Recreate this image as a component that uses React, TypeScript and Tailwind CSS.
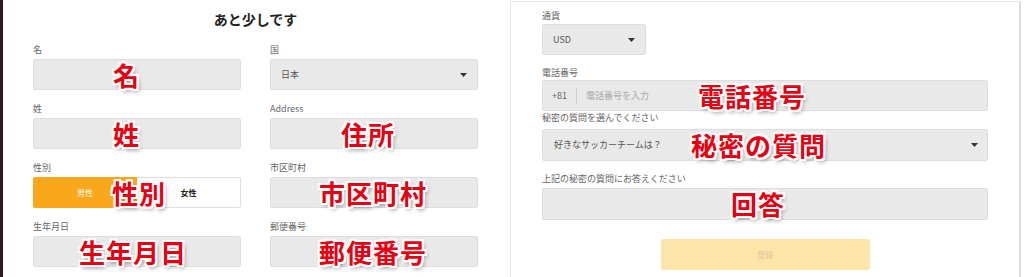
import React from "react";

const font = "font-['Noto_Sans_CJK_JP','Noto_Sans',sans-serif]";

function Annot({ text, className }: { text: string; className: string }) {
  return (
    <span
      className={`absolute top-1/2 -translate-y-1/2 text-[26px] leading-none font-bold text-[#e60012] whitespace-nowrap tracking-[1px] [text-shadow:-2px_-2px_0_#fff,2px_-2px_0_#fff,-2px_2px_0_#fff,2px_2px_0_#fff,0_-2px_0_#fff,0_2px_0_#fff,-2px_0_0_#fff,2px_0_0_#fff,2px_3px_4px_rgba(0,0,0,0.45)] ${className}`}
    >
      {text}
    </span>
  );
}

function Caret() {
  return (
    <svg width="7" height="4" viewBox="0 0 7 4" className="shrink-0">
      <path d="M0 0h7L3.5 4z" fill="#333" />
    </svg>
  );
}

function Field({
  label,
  annot,
  annotPos,
  children,
}: {
  label: string;
  annot?: string;
  annotPos?: string;
  children?: React.ReactNode;
}) {
  return (
    <div>
      <div className="h-[14px] text-[9px] leading-[14px] text-[#666]">{label}</div>
      <div className="relative mt-[2px] h-[31px] rounded-[2px] border border-[#dedede] bg-[#e9e9e9] flex items-center px-[10px] text-[9px] text-[#555]">
        {children}
        {annot && <Annot text={annot} className={annotPos ?? ""} />}
      </div>
    </div>
  );
}

export default function App() {
  return (
    <div className={`w-[1024px] h-[277px] bg-white flex overflow-hidden ${font}`}>
      {/* left screenshot */}
      <div className="w-[3px] h-full bg-[#2b1c1c]" />
      <div className="w-[507px] h-full pl-[30px] pt-[9px]">
        <div className="w-[445px] text-center text-[14px] leading-[20px] font-bold text-[#222]">あと少しです</div>
        <div className="mt-[14px] grid grid-cols-[208px_208px] gap-x-[29px] gap-y-[12px]">
          <Field label="名" annot="名" annotPos="left-[79px]" />
          <Field label="国">
            <span className="flex-1">日本</span>
            <Caret />
          </Field>
          <Field label="姓" annot="姓" annotPos="left-[79px]" />
          <Field label="Address" annot="住所" annotPos="left-[70px]" />
          <div>
            <div className="h-[14px] text-[9px] leading-[14px] text-[#666]">性別</div>
            <div className="relative mt-[2px] h-[31px] flex text-[8px]">
              <div className="w-1/2 rounded-l-[2px] bg-[#f9a81b] text-white flex items-center justify-center">男性</div>
              <div className="w-1/2 rounded-r-[2px] border border-l-0 border-[#dedede] bg-white text-[#222] font-bold flex items-center justify-center">女性</div>
              <Annot text="性別" className="left-[79px]" />
            </div>
          </div>
          <Field label="市区町村" annot="市区町村" annotPos="left-[48px]" />
          <Field label="生年月日" annot="生年月日" annotPos="left-[45px]" />
          <Field label="郵便番号" annot="郵便番号" annotPos="left-[48px]" />
        </div>
      </div>

      {/* right screenshot */}
      <div className="w-[511px] h-full mt-[1px] border-l border-t border-[#e6e6e6] border-r-[2px] border-r-[#dcdcdc] pl-[31px] pt-[7px]">
        <div className="w-[446px]">
          <div className="h-[14px] text-[9px] leading-[14px] text-[#666]">通貨</div>
          <div className="mt-[1px] w-[104px] h-[31px] rounded-[2px] border border-[#dedede] bg-[#e9e9e9] flex items-center px-[10px] text-[9px] text-[#555]">
            <span className="flex-1">USD</span>
            <Caret />
          </div>

          <div className="mt-[11px] h-[14px] text-[9px] leading-[14px] text-[#666]">電話番号</div>
          <div className="relative h-[31px] rounded-[2px] border border-[#dedede] bg-[#e9e9e9] flex items-center pl-[9px] text-[9px]">
            <span className="text-[#666]">+81</span>
            <span className="mx-[9px] w-px h-[16px] bg-[#d0d0d0]" />
            <span className="text-[#aaa]">電話番号を入力</span>
            <Annot text="電話番号" className="left-[155px]" />
          </div>

          <div className="h-[14px] text-[9px] leading-[14px] text-[#666]">秘密の質問を選んでください</div>
          <div className="relative mt-[4px] h-[32px] rounded-[2px] border border-[#dedede] bg-[#e9e9e9] flex items-center pl-[11px] pr-[9px] text-[9px] text-[#555]">
            <span className="flex-1">好きなサッカーチームは？</span>
            <Caret />
            <Annot text="秘密の質問" className="left-[148px]" />
          </div>

          <div className="mt-[11px] h-[14px] text-[9px] leading-[14px] text-[#666]">上記の秘密の質問にお答えください</div>
          <div className="relative mt-[2px] h-[32px] rounded-[2px] border border-[#dedede] bg-[#e9e9e9]">
            <Annot text="回答" className="left-[188px]" />
          </div>

          <div className="mt-[19px] flex justify-center">
            <button className="w-[209px] h-[31px] rounded-[2px] bg-[#fde4a9] text-[8px] text-[#d9c8a0]">登録</button>
          </div>
        </div>
      </div>
    </div>
  );
}
